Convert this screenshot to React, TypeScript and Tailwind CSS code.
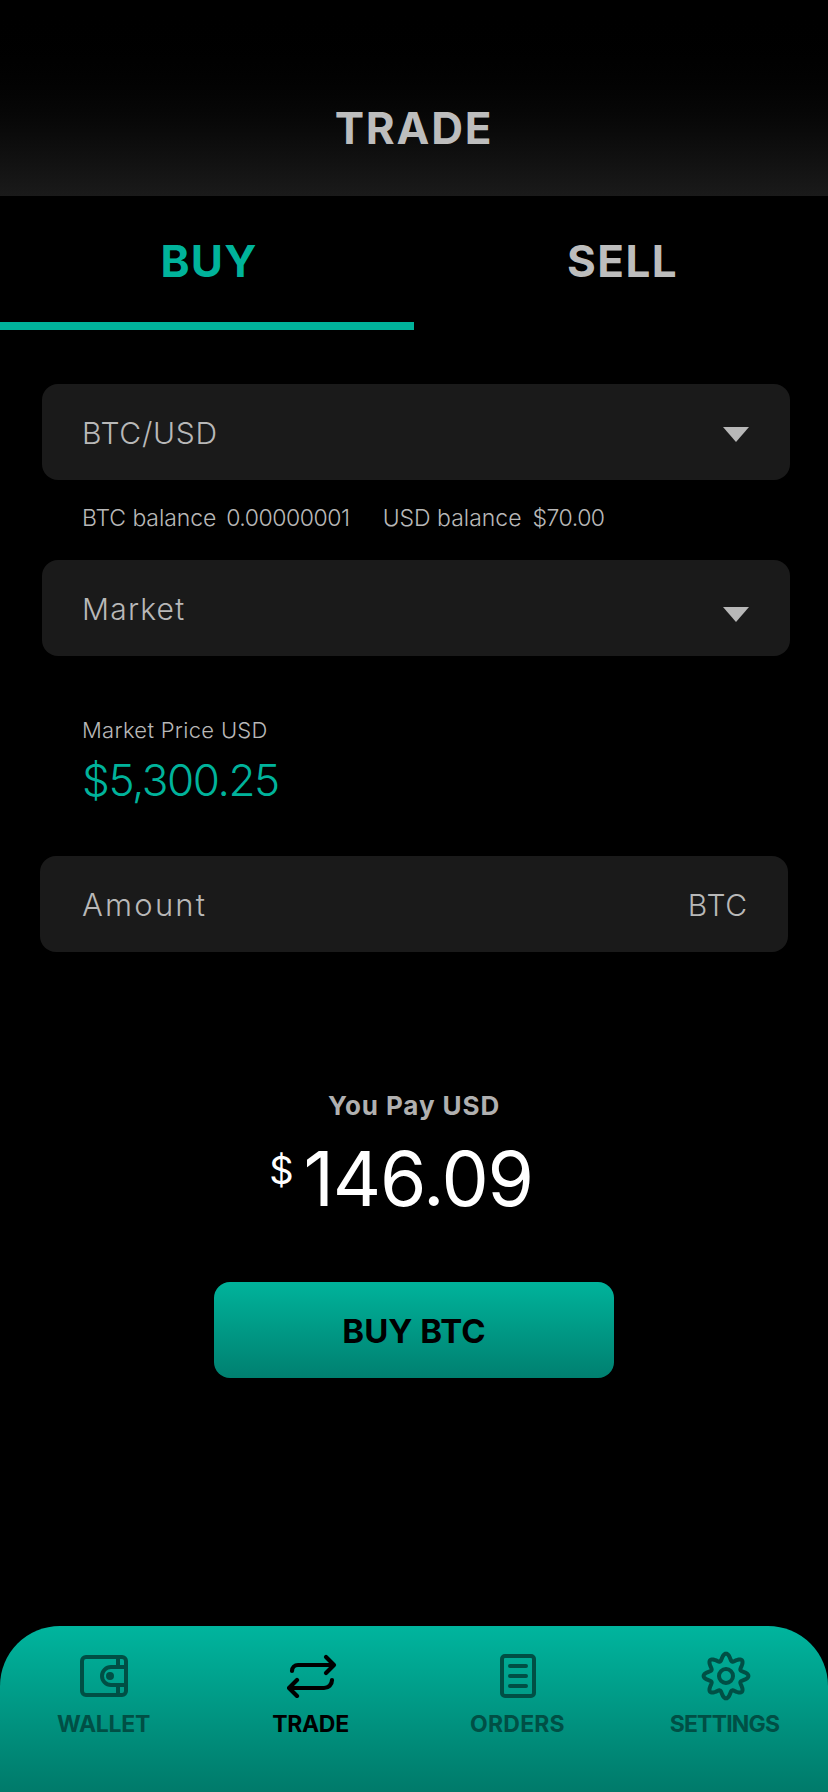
import React from 'react';

const WalletIcon = () => (
  <svg width="48" height="42" viewBox="0 0 48 42" fill="none" stroke="currentColor" strokeWidth="4" strokeLinejoin="round">
    <rect x="2" y="2" width="44" height="38" rx="4" />
    <path d="M38 2v12M38 28v12" />
    <path d="M46 12H31a9 9 0 0 0 0 18h15" />
    <circle cx="30" cy="21" r="2" fill="currentColor" />
  </svg>
);

const TradeIcon = () => (
  <svg className="ml-[3px]" width="50" height="44" viewBox="0 0 50 44" fill="none" stroke="currentColor" strokeWidth="4.2" strokeLinecap="round" strokeLinejoin="round">
    <path d="M39 3l8 8-8 8" />
    <path d="M5 17a6 6 0 0 1 6-6h35" />
    <path d="M10 26l-8 8 8 8" />
    <path d="M45 26a8 8 0 0 1-8 8H3" />
  </svg>
);

const OrdersIcon = () => (
  <svg width="36" height="44" viewBox="0 0 36 44" fill="none" stroke="currentColor" strokeWidth="4" strokeLinejoin="round">
    <rect x="2" y="2" width="32" height="40" rx="3" />
    <path d="M10 12h16M10 22h16M10 32h16" strokeLinecap="round" />
  </svg>
);

// eight rounded lobes, one pointing straight up
const cogPath = () => {
  const points: string[] = [];
  for (let i = 0; i < 160; i++) {
    const a = (i / 160) * Math.PI * 2;
    const r = 19 + 3.4 * Math.cos(8 * a);
    points.push(`${(25 + r * Math.sin(a)).toFixed(2)} ${(25 - r * Math.cos(a)).toFixed(2)}`);
  }
  return `M${points.join('L')}Z`;
};

const CogIcon = () => (
  <svg className="ml-[3px]" width="50" height="50" viewBox="0 0 50 50" fill="none" stroke="currentColor" strokeWidth="4" strokeLinejoin="round">
    <path d={cogPath()} />
    <circle cx="25" cy="25" r="7" />
  </svg>
);

const Caret = ({ className }: { className: string }) => (
  <svg className={className} width="26" height="15" viewBox="0 0 26 15">
    <path d="M0 0h26L13 15z" fill="#b8b8b8" />
  </svg>
);

const NAV = [
  { label: 'WALLET', icon: <WalletIcon />, active: false, tracking: 'tracking-[-0.3px]' },
  { label: 'TRADE', icon: <TradeIcon />, active: true, tracking: 'tracking-[-0.3px]' },
  { label: 'ORDERS', icon: <OrdersIcon />, active: false, tracking: 'tracking-[0.2px]' },
  { label: 'SETTINGS', icon: <CogIcon />, active: false, tracking: 'tracking-[-0.8px]' },
];

export default function App() {
  return (
    <div className="w-[828px] h-[1792px] flex flex-col bg-black overflow-hidden font-['Inter','Liberation_Sans',sans-serif]">
      <header className="h-[196px] shrink-0 flex items-end justify-center pb-[46px] bg-gradient-to-b from-black to-[#1a1a1a]">
        <h1 className="text-[44px] leading-[44px] font-bold text-[#bdbdbd] tracking-[1.8px]">TRADE</h1>
      </header>

      <div className="flex h-[134px] shrink-0">
        <div className="w-[414px] h-full border-b-[8px] border-[#00b39b] flex justify-center pt-[41px] pl-[4px]">
          <span className="text-[44px] leading-[48px] font-bold text-[#00b39b] tracking-[1.2px]">BUY</span>
        </div>
        <div className="w-[414px] flex justify-center pt-[41px] pl-[3px]">
          <span className="text-[44px] leading-[48px] font-bold text-[#bdbdbd] tracking-[1.4px]">SELL</span>
        </div>
      </div>

      <main className="flex-1 flex flex-col">
        <div className="mt-[54px] ml-[42px] w-[748px] h-[96px] rounded-[16px] bg-[#1a1a1a] flex items-center justify-between pl-[40px] pr-[41px]">
          <span className="text-[30px] text-[#b8b8b8] font-light tracking-[0.7px] mt-[2px]">BTC/USD</span>
          <Caret className="mt-[4px]" />
        </div>

        <div className="mt-[22px] ml-[82px] h-[32px] flex items-center text-[23px] font-light text-[#b8b8b8]">
          <span className="mr-[10px] tracking-[-0.1px]">BTC balance</span>
          <span className="mr-[33px] tracking-[-0.45px]">0.00000001</span>
          <span className="mr-[11px]">USD balance</span>
          <span className="tracking-[-0.5px]">$70.00</span>
        </div>

        <div className="mt-[26px] ml-[42px] w-[748px] h-[96px] rounded-[16px] bg-[#1a1a1a] flex items-center justify-between pl-[40px] pr-[41px]">
          <span className="text-[30px] text-[#b8b8b8] font-light tracking-[1.2px] mt-[2px]">Market</span>
          <Caret className="mt-[12px]" />
        </div>

        <div className="mt-[58px] ml-[82px] text-[22px] leading-[32px] font-light text-[#b8b8b8] tracking-[0.3px]">Market Price USD</div>
        <div className="mt-[6px] ml-[82px] text-[44px] leading-[56px] font-light text-[#00b39b] tracking-[-1.4px]">$5,300.25</div>

        <div className="mt-[48px] ml-[40px] w-[748px] h-[96px] rounded-[16px] bg-[#1a1a1a] flex items-center justify-between pl-[42px] pr-[40px]">
          <span className="text-[31px] text-[#b8b8b8] font-light tracking-[2.2px] mt-[2px]">Amount</span>
          <span className="text-[30px] text-[#b8b8b8] font-light tracking-[0.8px] mt-[2px]">BTC</span>
        </div>

        <div className="mt-[136px] text-center text-[26px] leading-[36px] font-bold text-[#b0b0b0] tracking-[0.9px]">You Pay USD</div>
        <div className="mt-[10px] pr-[26px] flex justify-center items-start text-white h-[90px]">
          <span className="text-[38px] leading-[44px] mt-[14px] mr-[10px]">$</span>
          <span className="text-[75px] leading-[90px] font-normal tracking-[-1.2px]">146.09</span>
        </div>

        <button className="mt-[58px] mx-auto w-[400px] h-[96px] pt-[3px] rounded-[16px] bg-gradient-to-b from-[#00b39b] to-[#008070] text-black text-[33px] font-bold">
          BUY BTC
        </button>
      </main>

      <nav className="h-[166px] shrink-0 rounded-t-[60px] bg-gradient-to-b from-[#00b59e] to-[#007a6a] grid grid-cols-4">
        {NAV.map((item) => (
          <div
            key={item.label}
            className={`flex flex-col items-center pt-[22px] ${item.active ? 'text-black' : 'text-[#004f45]'}`}
          >
            <div className="h-[56px] flex items-center justify-center">{item.icon}</div>
            <span className={`mt-[4px] text-[23px] leading-[32px] font-bold ${item.tracking}`}>{item.label}</span>
          </div>
        ))}
      </nav>
    </div>
  );
}
